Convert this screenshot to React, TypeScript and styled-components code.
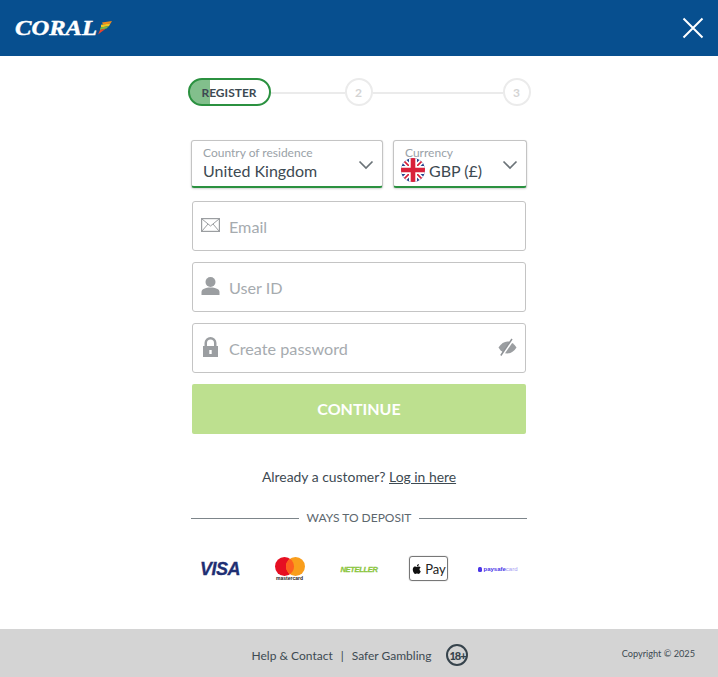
import React from "react";
import styled, {createGlobalStyle} from "styled-components";

const GlobalStyle = createGlobalStyle`
  html, body {
    margin: 0;
    padding: 0;
    background: #fff;
    font-family: Lato, "Open Sans", sans-serif;
  }
`;

const Page = styled.div`
  width: 718px;
  height: 677px;
  display: flex;
  flex-direction: column;
  overflow: hidden;
`;

const Header = styled.header`
  height: 56px;
  flex: none;
  background: #074f8f;
  display: flex;
  align-items: center;
  justify-content: space-between;
  padding: 0 14px 0 15px;
`;

const Logo = styled.div`
  display: flex;
  align-items: flex-start;
`;

const LogoText = styled.span`
  display: inline-block;
  width: 83px;
  font-family: "Liberation Serif", serif;
  font-weight: 700;
  font-style: italic;
  font-size: 20px;
  line-height: 24px;
  color: #fff;
  -webkit-text-stroke: 0.4px #fff;
  transform: scaleX(1.23);
  transform-origin: left center;
`;

const LogoMark = styled.svg`
  width: 14px;
  height: 14px;
  margin-top: 5px;
`;

const Close = styled.button`
  width: 22px;
  height: 22px;
  padding: 0;
  border: 0;
  background: none;
  display: flex;
`;

const Main = styled.main`
  flex: 1;
  display: flex;
  flex-direction: column;
  align-items: center;
`;

const Stepper = styled.div`
  width: 343px;
  height: 28px;
  margin-top: 22px;
  display: flex;
  align-items: center;
`;

const ActiveStep = styled.div`
  width: 83px;
  height: 28px;
  flex: none;
  box-sizing: border-box;
  border: 2px solid #2b9140;
  border-radius: 14px;
  background: linear-gradient(90deg, #82bf8c 0, #82bf8c 20px, #fff 20px);
  color: #3d4a52;
  font-size: 12px;
  font-weight: 700;
  display: flex;
  align-items: center;
  justify-content: center;
`;

const StepLine = styled.div<{$width: number}>`
  width: ${props => props.$width}px;
  height: 2px;
  margin-top: 1px;
  flex: none;
  background: #ebebeb;
`;

const StepDot = styled.div`
  width: 28px;
  height: 28px;
  flex: none;
  box-sizing: border-box;
  border: 2px solid #ebebeb;
  border-radius: 50%;
  color: #d4d4d4;
  font-size: 12px;
  font-weight: 700;
  display: flex;
  align-items: center;
  justify-content: center;
`;

const SelectRow = styled.div`
  width: 336px;
  margin-top: 34px;
  display: flex;
  gap: 10px;
`;

const Select = styled.div<{$width: number}>`
  width: ${props => props.$width}px;
  height: 48px;
  flex: none;
  box-sizing: border-box;
  padding: 4px 0 0 11px;
  border: 1px solid #c4c4c4;
  border-bottom: 2px solid #2b9140;
  border-radius: 3px;
  box-shadow: 0 1px 2px rgba(0, 0, 0, 0.18);
  position: relative;
`;

const SelectLabel = styled.div`
  font-size: 12px;
  line-height: 15px;
  color: #9aa2a8;
`;

const SelectValue = styled.div`
  display: flex;
  align-items: center;
  gap: 4px;
  height: 20px;
  font-size: 16px;
  color: #3d4a52;
`;

const Chevron = styled.svg`
  position: absolute;
  top: 19px;
  right: 8px;
  width: 16px;
  height: 10px;
`;

const FlagWrap = styled.svg`
  width: 24px;
  height: 24px;
  flex: none;
  margin-left: -4px;
`;

const Form = styled.div`
  width: 334px;
  margin-top: 13px;
  display: flex;
  flex-direction: column;
  gap: 11px;
`;

const Field = styled.div`
  height: 50px;
  box-sizing: border-box;
  padding: 0 8px;
  border: 1px solid #c4c4c4;
  border-radius: 3px;
  display: flex;
  align-items: center;
  gap: 9px;
`;

const FieldIcon = styled.svg`
  width: 19px;
  height: 20px;
  flex: none;
  margin-top: -3px;
`;

const Placeholder = styled.span`
  flex: 1;
  padding-top: 1px;
  font-size: 16.2px;
  color: #a6abaf;
`;

const EyeIcon = styled.svg`
  width: 19px;
  height: 19px;
  flex: none;
  margin-top: -1px;
`;

const Continue = styled.button`
  height: 50px;
  padding: 0 0 2px;
  border: 0;
  border-radius: 2px;
  background: #bde08f;
  color: #fff;
  font-family: inherit;
  font-size: 16px;
  font-weight: 700;
`;

const Login = styled.p`
  margin: 33px 0 0;
  font-size: 13.9px;
  line-height: 20px;
  color: #3d4a52;

  a {
    color: inherit;
    text-decoration: underline;
  }
`;

const Divider = styled.div`
  width: 336px;
  margin-top: 23px;
  display: flex;
  align-items: center;
  gap: 8px;
  font-size: 12px;
  line-height: 16px;
  color: #5d676e;

  &::before,
  &::after {
    content: "";
    flex: 1;
    height: 1px;
    background: #7d858a;
  }
`;

const Payments = styled.div`
  margin-top: 29px;
  height: 28px;
  display: grid;
  grid-template-columns: repeat(5, 69.5px);
  align-items: center;
  justify-items: center;
`;

const Visa = styled.span`
  font-family: "Liberation Sans", sans-serif;
  font-style: italic;
  font-weight: 700;
  font-size: 18px;
  letter-spacing: -0.5px;
  color: #1f2f73;
  -webkit-text-stroke: 0.3px #1f2f73;
`;

const MasterCard = styled.div`
  width: 30px;
  display: flex;
  flex-direction: column;
  align-items: center;
`;

const MasterCardName = styled.span`
  font-family: "Liberation Sans", sans-serif;
  font-weight: 700;
  font-size: 5px;
  line-height: 5px;
  color: #222;
`;

const Neteller = styled.span`
  font-family: "Liberation Sans", sans-serif;
  font-style: italic;
  font-weight: 700;
  font-size: 7.5px;
  letter-spacing: -0.3px;
  color: #8cc63f;
  -webkit-text-stroke: 0.3px #8cc63f;
`;

const ApplePay = styled.div`
  width: 39px;
  height: 25px;
  margin-top: -1px;
  box-sizing: border-box;
  border: 1px solid #777;
  border-radius: 3px;
  box-shadow: 0 0 1px rgba(0, 0, 0, 0.5);
  display: flex;
  align-items: center;
  justify-content: center;
  gap: 2px;
  font-size: 13px;
  color: #222;
`;

const Paysafe = styled.span`
  display: flex;
  align-items: center;
  gap: 1px;
  font-family: "Liberation Sans", sans-serif;
  font-size: 6px;
  font-weight: 700;
  color: #4a35e8;

  em {
    font-style: normal;
    font-weight: 400;
    color: #a59bf2;
  }
`;

const PaysafeMark = styled.i`
  width: 4px;
  height: 5px;
  border-radius: 1.5px;
  background: #4a35e8;
`;

const Footer = styled.footer`
  height: 48px;
  flex: none;
  background: #d4d4d4;
  display: flex;
  align-items: center;
  position: relative;
  color: #3d4a52;
  font-size: 12px;
`;

const FooterLinks = styled.div`
  flex: 1;
  padding: 4px 0 0 2px;
  display: flex;
  align-items: center;
  justify-content: center;
`;

const FooterSeparator = styled.span`
  margin: 0 8px;
`;

const AgeBadge = styled.span`
  width: 22px;
  height: 22px;
  margin-left: 15px;
  box-sizing: border-box;
  border: 2px solid #36434c;
  border-radius: 50%;
  display: flex;
  align-items: center;
  justify-content: center;
  font-size: 11px;
  font-weight: 900;
  letter-spacing: -1px;
  color: #36434c;
`;

const Copyright = styled.span`
  position: absolute;
  right: 23px;
  top: 18px;
  font-size: 9.2px;
  line-height: 14px;
`;

const ChevronDown = () => (
  <Chevron viewBox="0 0 16 10" fill="none">
    <path d="M1.5 1.5 8 8l6.5-6.5" stroke="#6b7378" strokeWidth="1.7" />
  </Chevron>
);

const UkFlag = () => (
  <FlagWrap viewBox="0 0 24 24">
    <defs>
      <clipPath id="flag-circle">
        <circle cx="12" cy="12" r="12" />
      </clipPath>
    </defs>
    <g clipPath="url(#flag-circle)">
      <rect width="24" height="24" fill="#27458f" />
      <path d="M0 0 24 24M24 0 0 24" stroke="#fff" strokeWidth="5" />
      <path d="M0 0 24 24M24 0 0 24" stroke="#d8213b" strokeWidth="1.6" />
      <path d="M12 0v24M0 12h24" stroke="#fff" strokeWidth="8" />
      <path d="M12 0v24M0 12h24" stroke="#d8213b" strokeWidth="4.6" />
    </g>
  </FlagWrap>
);

const App = () => (
  <Page>
    <GlobalStyle />
    <Header>
      <Logo>
        <LogoText>CORAL</LogoText>
        <LogoMark viewBox="0 0 14 14">
          <path d="M4 1.500 14 0 12.500 2.500 5 3.500Z" fill="#f08a1d" />
          <path d="M3 3.800 12.500 2.500 11 5 3 6.500Z" fill="#f4c51f" />
          <path d="M2.500 6.500 11 5 8.500 7.500 2 9Z" fill="#7fb93e" />
          <path d="M2 9 8 7.500 4 10.500 0 13.500Z" fill="#e8452e" />
        </LogoMark>
      </Logo>
      <Close aria-label="Close">
        <svg width="22" height="22" viewBox="0 0 22 22">
          <path d="M1.5 1.5 20.5 20.5M20.5 1.5 1.5 20.5" stroke="#fff" strokeWidth="2" />
        </svg>
      </Close>
    </Header>

    <Main>
      <Stepper>
        <ActiveStep>REGISTER</ActiveStep>
        <StepLine $width={74} />
        <StepDot>2</StepDot>
        <StepLine $width={130} />
        <StepDot>3</StepDot>
      </Stepper>

      <SelectRow>
        <Select $width={192}>
          <SelectLabel>Country of residence</SelectLabel>
          <SelectValue>United Kingdom</SelectValue>
          <ChevronDown />
        </Select>
        <Select $width={134}>
          <SelectLabel>Currency</SelectLabel>
          <SelectValue>
            <UkFlag />
            GBP (£)
          </SelectValue>
          <ChevronDown />
        </Select>
      </SelectRow>

      <Form>
        <Field>
          <FieldIcon viewBox="0 0 19 20" fill="none">
            <rect x="0.6" y="3.6" width="17.8" height="12.8" stroke="#9b9ea1" strokeWidth="1.2" />
            <path d="M1 4l8.5 7L18 4M1 16l6-7M18 16l-6-7" stroke="#9b9ea1" />
          </FieldIcon>
          <Placeholder>Email</Placeholder>
        </Field>
        <Field>
          <FieldIcon viewBox="0 0 19 20" fill="#9b9ea1">
            <circle cx="9.5" cy="6" r="5" />
            <path d="M0.5 19v-3c0-3 4-4.500 9-4.500s9 1.500 9 4.500v3Z" />
          </FieldIcon>
          <Placeholder>User ID</Placeholder>
        </Field>
        <Field>
          <FieldIcon viewBox="0 0 19 20" fill="#9b9ea1">
            <path
              fillRule="evenodd"
              d="M2 9h1.500V6a6 6 0 0 1 12 0v3H17v11H2ZM6 9h7V6a3.500 3.500 0 0 0-7 0Zm2.300 4v4h2.400v-4Z"
            />
          </FieldIcon>
          <Placeholder>Create password</Placeholder>
          <EyeIcon viewBox="0 0 19 19" fill="none">
            <path d="M.5 9.500C3 5.500 6.200 3.500 9.500 3.500s6.500 2 9 6c-2.500 4-5.700 6-9 6s-6.500-2-9-6Z" fill="#9b9ea1" />
            <path d="M4 17.500 15 1.500" stroke="#fff" strokeWidth="2.400" />
            <path d="M2.800 17.500 14 1" stroke="#8f9296" strokeWidth="1.500" />
          </EyeIcon>
        </Field>
        <Continue>CONTINUE</Continue>
      </Form>

      <Login>
        Already a customer? <a href="#login">Log in here</a>
      </Login>

      <Divider>WAYS TO DEPOSIT</Divider>

      <Payments>
        <Visa>VISA</Visa>
        <MasterCard>
          <svg width="30" height="19" viewBox="0 0 30 19">
            <circle cx="9.500" cy="9.500" r="9.500" fill="#e60f22" />
            <circle cx="20.500" cy="9.500" r="9.500" fill="#f99e1c" />
            <path d="M15 1.750a9.500 9.500 0 0 1 0 15.500a9.500 9.500 0 0 1 0-15.500Z" fill="#fd6020" />
          </svg>
          <MasterCardName>mastercard</MasterCardName>
        </MasterCard>
        <Neteller>NETELLER</Neteller>
        <ApplePay>
          <svg width="12" height="14" viewBox="0 0 24 24" fill="#111">
            <path d="M17.100 12.600c0-2.500 2-3.700 2.100-3.800-1.200-1.700-3-1.900-3.600-1.900-1.500-.2-3 .9-3.800.9s-2-.9-3.300-.9c-1.700 0-3.300 1-4.100 2.500-1.800 3-.5 7.600 1.200 10 .8 1.200 1.800 2.500 3.100 2.500s1.700-.8 3.200-.8 1.900.8 3.200.8 2.200-1.200 3-2.400c1-1.400 1.300-2.700 1.400-2.800-.1 0-2.400-1-2.400-4.100ZM14.700 5.300c.7-.8 1.100-2 1-3.200-1 0-2.200.7-2.900 1.500-.6.700-1.200 1.900-1 3 1.100.1 2.200-.5 2.900-1.300Z" />
          </svg>
          Pay
        </ApplePay>
        <Paysafe>
          <PaysafeMark />
          <span>
            paysafe<em>card</em>
          </span>
        </Paysafe>
      </Payments>
    </Main>

    <Footer>
      <FooterLinks>
        Help &amp; Contact
        <FooterSeparator>|</FooterSeparator>
        Safer Gambling
        <AgeBadge>18+</AgeBadge>
      </FooterLinks>
      <Copyright>Copyright © 2025</Copyright>
    </Footer>
  </Page>
);

export default App;
